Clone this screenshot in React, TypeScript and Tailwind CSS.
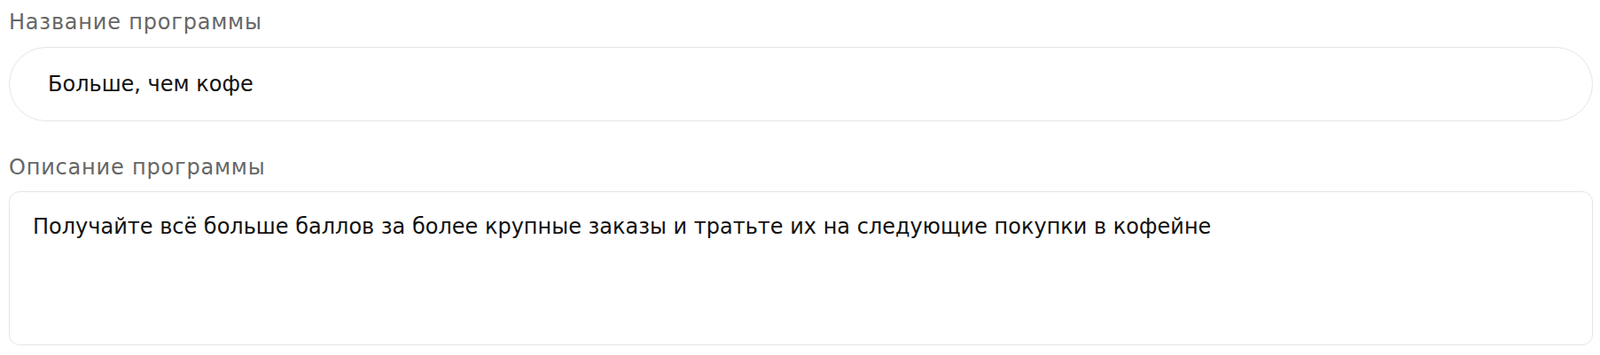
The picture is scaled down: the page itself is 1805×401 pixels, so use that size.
export default function App() {
  return (
    <div className="min-h-screen bg-white pl-[10px] pr-[8px] pt-[11px] font-['DejaVu_Sans',sans-serif] text-[24px] leading-[28px]">
      {/* Name */}
      <label className="block tracking-[0.8px] text-[#666666]">Название программы</label>
      <input
        readOnly
        defaultValue="Больше, чем кофе"
        className="mt-[14px] block h-[84px] w-full rounded-full border border-[#e5e5e5] bg-white pl-[43px] pr-6 text-[#111111] outline-none"
      />

      {/* Description */}
      <label className="mt-[38px] block tracking-[0.8px] text-[#666666]">Описание программы</label>
      <textarea
        readOnly
        defaultValue="Получайте всё больше баллов за более крупные заказы и тратьте их на следующие покупки в кофейне"
        className="mt-[13px] block h-[174px] w-full resize-none rounded-[12px] border border-[#e5e5e5] bg-white px-[26px] pt-[25px] text-[#111111] outline-none"
      />
    </div>
  );
}
